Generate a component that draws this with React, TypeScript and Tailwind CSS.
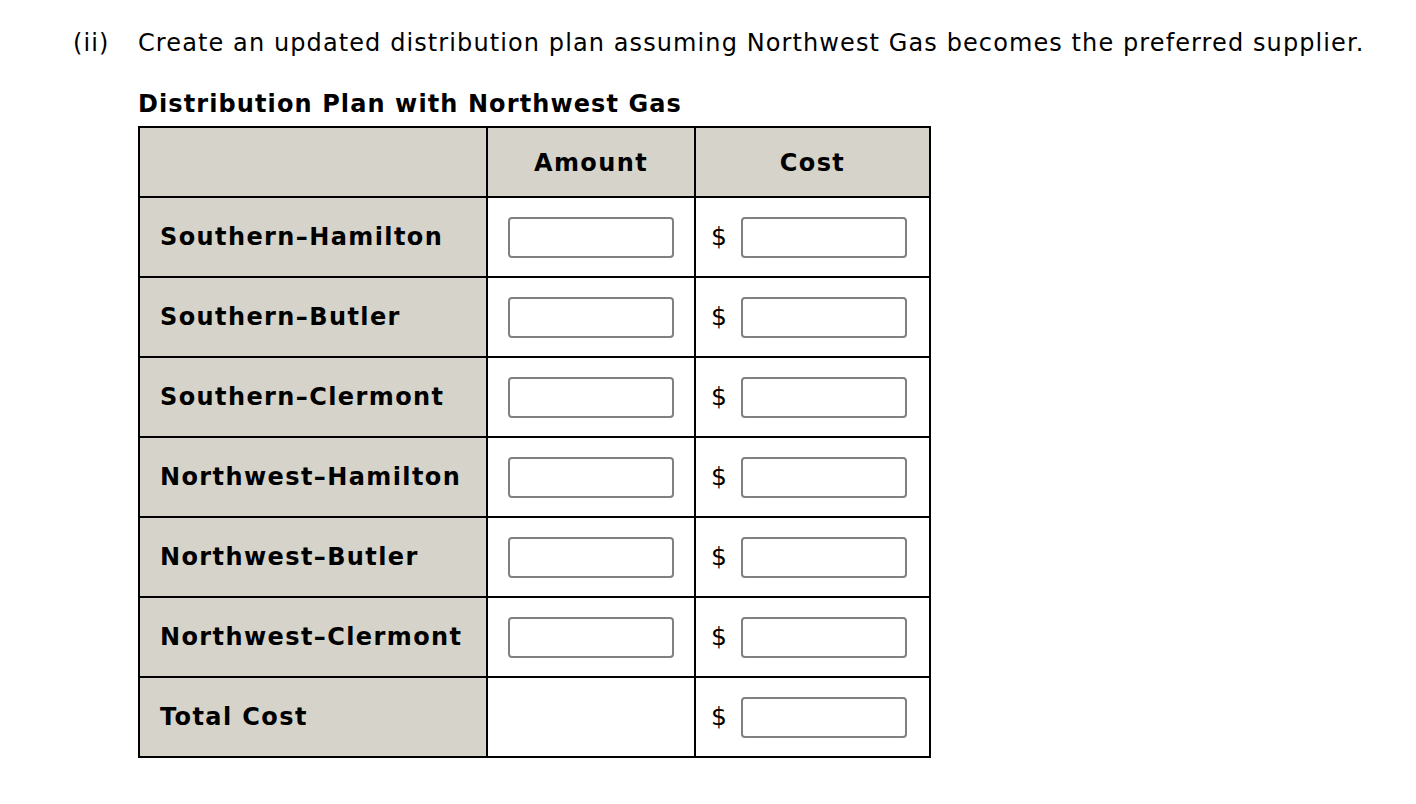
import React from "react";

const rows = [
  "Southern–Hamilton",
  "Southern–Butler",
  "Southern–Clermont",
  "Northwest–Hamilton",
  "Northwest–Butler",
  "Northwest–Clermont",
];

function Box() {
  return <div className="w-[166px] h-[41px] rounded-[4px] border-2 border-[#808080] bg-white" />;
}

function CostCell() {
  return (
    <div className="flex items-center pl-[15px]">
      <span className="w-[30px] font-normal tracking-[2px] text-[25px]">$</span>
      <Box />
    </div>
  );
}

export default function App() {
  return (
    <div className="w-[1416px] h-[804px] bg-white text-black" style={{ fontFamily: '"DejaVu Sans", Verdana, sans-serif' }}>
      <div className="pt-[27px] pl-[73px] flex text-[24px] leading-[32px] tracking-[1.1px]">
        <span className="w-[65px]">(ii)</span>
        <span>Create an updated distribution plan assuming Northwest Gas becomes the preferred supplier.</span>
      </div>
      <div className="pl-[138px]">
        <div className="mt-[29px] text-[24px] font-bold leading-[32px] tracking-[1.1px]">Distribution Plan with Northwest Gas</div>
        <table className="mt-[6px] border-collapse border-2 border-black text-[24px] tracking-[1.4px]">
          <thead>
            <tr className="h-[70px] bg-[#d6d3ca]">
              <th className="w-[348px] border-2 border-black"></th>
              <th className="w-[208px] border-2 border-black font-bold pt-[2px]">Amount</th>
              <th className="w-[235px] border-2 border-black font-bold pt-[2px]">Cost</th>
            </tr>
          </thead>
          <tbody>
            {rows.map((r) => (
              <tr key={r} className="h-[80px]">
                <td className="border-2 border-black bg-[#d6d3ca] pl-[20px] font-bold text-left">{r}</td>
                <td className="border-2 border-black bg-white">
                  <div className="flex justify-center"><Box /></div>
                </td>
                <td className="border-2 border-black bg-white">
                  <CostCell />
                </td>
              </tr>
            ))}
            <tr className="h-[80px]">
              <td className="border-2 border-black bg-[#d6d3ca] pl-[20px] font-bold text-left">Total Cost</td>
              <td className="border-2 border-black bg-white"></td>
              <td className="border-2 border-black bg-white">
                <CostCell />
              </td>
            </tr>
          </tbody>
        </table>
      </div>
    </div>
  );
}
